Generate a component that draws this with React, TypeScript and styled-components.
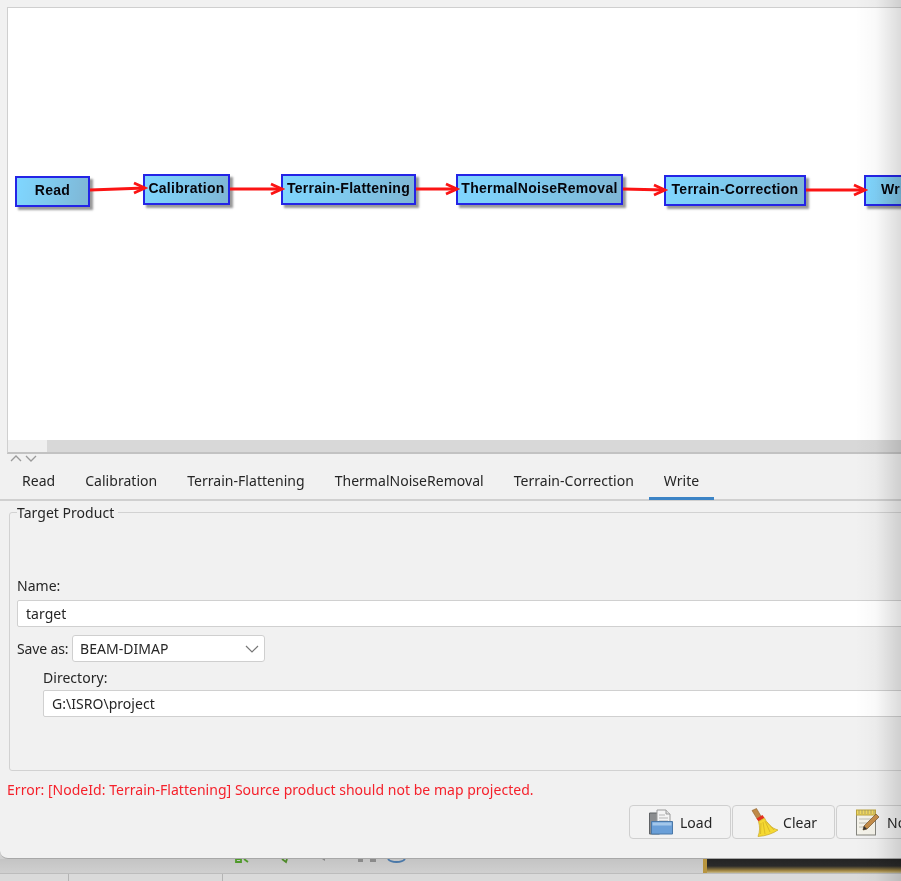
import React from "react";
import styled, { createGlobalStyle } from "styled-components";

const Global = createGlobalStyle`
  html, body { margin: 0; padding: 0; background: #d2d2d2; }
  * { box-sizing: border-box; }
`;

const Screen = styled.div`
  position: relative;
  width: 901px;
  height: 881px;
  overflow: hidden;
  font-family: "Noto Sans", "Open Sans", sans-serif;
  font-size: 14px;
  letter-spacing: 0.03px;
  color: #262626;
  background: #d0d0d0;
  filter: blur(0.35px);
`;

const Dialog = styled.div`
  position: relative;
  z-index: 1;
  width: 901px;
  height: 859px;
  padding-top: 7px;
  background: #f1f1f1;
  border-bottom: 1px solid #a8a8a8;
  border-bottom-left-radius: 8px;
  display: flex;
  flex-direction: column;
  overflow: hidden;
`;

const EdgeShade = styled.div`
  position: absolute;
  top: 0;
  right: 0;
  bottom: 0;
  width: 46px;
  background: linear-gradient(to right, rgba(0,0,0,0) 0%, rgba(0,0,0,0.025) 45%, rgba(0,0,0,0.14) 100%);
  pointer-events: none;
  z-index: 5;
`;

const CanvasFrame = styled.div`
  margin-left: 7px;
  width: 910px;
  height: 447px;
  flex: none;
  border: 1px solid #cfcfcf;
  border-bottom: 2px solid #c2c2c2;
  display: flex;
  flex-direction: column;
`;

const Canvas = styled.div`
  position: relative;
  height: 433px;
  background: #fff;
`;

const ScrollTrack = styled.div`
  height: 12px;
  background: #d8d8d8;
`;

const ScrollThumb = styled.div`
  width: 39px;
  height: 100%;
  background: #efefef;
`;

const Node = styled.div<{ $x: number; $y: number; $w: number; $up?: boolean }>`
  position: absolute;
  left: ${p => p.$x}px;
  top: ${p => p.$y}px;
  width: ${p => p.$w}px;
  height: 31px;
  border: 2px solid #2424e6;
  background: linear-gradient(100deg, #7fd6ff 0%, #7fc8ec 50%, #7fb6d4 100%);
  box-shadow: 3px 3px 2px rgba(70, 70, 70, 0.55);
  display: flex;
  align-items: center;
  justify-content: center;
  padding-bottom: 4px;
  font-family: "Liberation Sans", Arial, sans-serif;
  font-weight: 700;
  font-size: 14px;
  letter-spacing: 0.28px;
  color: #05050c;
  white-space: nowrap;
  overflow: hidden;
`;

const WriteLabel = styled.span`
  position: absolute;
  left: 15px;
  top: 4px;
`;

const Arrows = styled.svg`
  position: absolute;
  left: 0;
  top: 0;
  width: 900px;
  height: 433px;
  pointer-events: none;
`;

const Chevrons = styled.svg`
  display: block;
  margin: 0 0 0 10px;
  width: 28px;
  height: 10px;
  flex: none;
`;

const TabBar = styled.div`
  display: flex;
  height: 37px;
  padding-left: 7px;
  border-bottom: 2px solid #d0d0d0;
  flex: none;
`;

const Tab = styled.div<{ $active?: boolean }>`
  height: 36px;
  padding: 7px 15px 0;
  line-height: 20px;
  white-space: nowrap;
  border-bottom: 3px solid ${p => (p.$active ? "#3c84c6" : "transparent")};
`;

const Group = styled.fieldset`
  margin: 2px 0 0 9px;
  padding: 0 0 0 7px;
  width: 920px;
  height: 268px;
  flex: none;
  border: 1px solid #d2d2d2;
  border-radius: 3px;
  min-inline-size: 0;
  display: block;
`;

const Legend = styled.legend`
  padding: 0 4px 0 0;
  line-height: 19px;
  white-space: nowrap;
`;

const Label = styled.div<{ $top: number; $indent?: number }>`
  margin-top: ${p => p.$top}px;
  margin-left: ${p => p.$indent ?? 0}px;
  line-height: 18px;
  white-space: nowrap;
`;

const TextField = styled.div<{ $indent?: number; $top?: number }>`
  margin-left: ${p => p.$indent ?? 0}px;
  margin-top: ${p => p.$top ?? 0}px;
  height: 27px;
  padding: 0 8px;
  line-height: 26px;
  background: #fff;
  border: 1px solid #d0d0d0;
  border-radius: 2px;
`;

const SaveRow = styled.div`
  display: flex;
  align-items: center;
  gap: 3px;
  margin-top: 8px;
  height: 27px;
`;

const SaveLabel = styled.span`
  width: 52px;
  flex: none;
  letter-spacing: -0.15px;
  white-space: nowrap;
`;

const Select = styled.div`
  width: 193px;
  height: 27px;
  padding: 0 5px 0 7px;
  background: #fff;
  border: 1px solid #cfcfcf;
  border-radius: 3px;
  display: flex;
  align-items: center;
  justify-content: space-between;
  line-height: 26px;
`;

const ErrorText = styled.div`
  margin: 9px 0 0 7px;
  line-height: 20px;
  color: #f5212b;
  white-space: nowrap;
  flex: none;
`;

const Actions = styled.div`
  display: flex;
  gap: 1px;
  margin: 5px 0 0 629px;
  width: 400px;
  flex: none;
`;

const ActionButton = styled.div<{ $w: number; $gap?: number }>`
  width: ${p => p.$w}px;
  height: 34px;
  flex: none;
  display: flex;
  align-items: center;
  justify-content: flex-start;
  gap: ${p => p.$gap ?? 6}px;
  padding-left: 18px;
  background: #f2f2f2;
  border: 1px solid #cfcfcf;
  border-radius: 4px;
  white-space: nowrap;
`;

const BottomStrip = styled.div`
  height: 22px;
  position: relative;
  background: linear-gradient(to bottom, #c4c4c4, #d6d6d6);
`;

const StatusLine = styled.div`
  position: absolute;
  left: 0;
  right: 0;
  top: 14px;
  height: 8px;
  background: #dadada;
  border-top: 1px solid #bcbcbc;
  display: flex;
`;

const StatusCell = styled.div<{ $w: number }>`
  width: ${p => p.$w}px;
  border-right: 1px solid #b4b4b4;
  flex: none;
`;

const ToolRow = styled.svg`
  position: absolute;
  left: 230px;
  top: 0;
  width: 190px;
  height: 5px;
`;

const PhotoEdge = styled.div`
  position: absolute;
  z-index: 1;
  left: 703px;
  right: 0;
  top: 0;
  height: 14px;
  background: linear-gradient(to bottom, #242424 0%, #2a2a2a 50%, #a88c45 85%, #c4b98f 100%);
  border-left: 4px solid #b8953f;
`;

const nodes = [
  { label: "Read", x: 7, y: 168, w: 75 },
  { label: "Calibration", x: 135, y: 166, w: 87 },
  { label: "Terrain-Flattening", x: 273, y: 166, w: 135 },
  { label: "ThermalNoiseRemoval", x: 448, y: 166, w: 167 },
  { label: "Terrain-Correction", x: 656, y: 167, w: 142 },
];

const links = [
  [82, 182, 137, 180],
  [222, 181, 274, 181],
  [408, 181, 449, 181],
  [615, 181, 657, 182],
  [798, 182, 857, 182],
];

const FolderIcon = () => (
  <svg width="26" height="27" viewBox="0 0 26 27">
    <path d="M1.500 4h10v21h-10z" fill="#8b8d8f" stroke="#5f6265" />
    <path d="M9 1h9l4 4v12H9z" fill="#f4f4f4" stroke="#9a9a9a" />
    <path d="M18 1v4h4" fill="#ddd" stroke="#9a9a9a" />
    <path d="M11 6h6M11 9h9M11 12h9" stroke="#b5b5b5" />
    <path d="M3.500 12.500h21v12.500h-21z" fill="#6a9fd8" stroke="#4a78a8" />
    <path d="M4.500 13.500h19v3h-19z" fill="#a3c7ea" />
  </svg>
);

const BroomIcon = () => (
  <svg width="28" height="29" viewBox="0 0 28 29">
    <path d="M1 2.500l4.500-2 5 8.500-4 2.500z" fill="#c08a48" stroke="#8f6128" strokeWidth=".6" />
    <path d="M5.500 10.500l6-3.500 2 3-6 3.500z" fill="#e4301f" />
    <path d="M7.500 13.500l6-3.500c3 6 7 10 13.500 12-5 3.500-12 6-20 6.500 2-5 2-10 .5-15z" fill="#f5d932" stroke="#c8a828" strokeWidth=".7" />
    <path d="M10 15l-.5 11M12 14l2 12M14 13l5 11M16 14l7 8" stroke="#d4b324" strokeWidth=".8" fill="none" />
  </svg>
);

const NoteIcon = () => (
  <svg width="26" height="27" viewBox="0 0 26 27">
    <rect x="1.500" y="4" width="19" height="22" fill="#f5f3ea" stroke="#85857f" />
    <rect x="1.500" y="1" width="19" height="5" fill="#f1d85f" stroke="#b9a23d" />
    <path d="M4 1v4M7 1v4M10 1v4M13 1v4M16 1v4M19 1v4" stroke="#8f8f70" strokeWidth=".7" />
    <path d="M4 10h12M4 14h8M4 18h6" stroke="#bcbcb2" />
    <path d="M8 21l1-4L21 5l3 3L12 20z" fill="#c58d49" stroke="#73522a" strokeWidth=".7" />
    <path d="M8 21l1-4 3 3z" fill="#333" />
  </svg>
);

export default function App() {
  return (
    <Screen>
      <Global />
      <Dialog>
        <CanvasFrame>
          <Canvas>
            {nodes.map(n => (
              <Node key={n.label} $x={n.x} $y={n.y} $w={n.w}>{n.label}</Node>
            ))}
            <Node $x={856} $y={167} $w={60}><WriteLabel>Write</WriteLabel></Node>
            <Arrows viewBox="0 0 900 433">
              {links.map(([a, b, c, d]) => (
                <g key={a} fill="none" stroke="#fb1414" strokeWidth="2.800">
                  <path d={`M${a} ${b}L${c} ${d}`} />
                  <path d={`M${c - 11} ${d - 5}L${c} ${d}L${c - 11} ${d + 5}`} />
                </g>
              ))}
            </Arrows>
          </Canvas>
          <ScrollTrack><ScrollThumb /></ScrollTrack>
        </CanvasFrame>
        <Chevrons viewBox="0 0 28 10">
          <path d="M1 7l5-5 5 5M16 2l5 5 5-5" fill="none" stroke="#9a9a9a" strokeWidth="1.300" />
        </Chevrons>
        <TabBar>
          <Tab>Read</Tab>
          <Tab>Calibration</Tab>
          <Tab>Terrain-Flattening</Tab>
          <Tab>ThermalNoiseRemoval</Tab>
          <Tab>Terrain-Correction</Tab>
          <Tab $active>Write</Tab>
        </TabBar>
        <Group>
          <Legend>Target Product</Legend>
          <Label $top={55}>Name:</Label>
          <TextField $top={5}>target</TextField>
          <SaveRow>
            <SaveLabel>Save as:</SaveLabel>
            <Select>
              <span>BEAM-DIMAP</span>
              <svg width="14" height="8" viewBox="0 0 14 8">
                <path d="M1 1l6 6 6-6" fill="none" stroke="#777" strokeWidth="1.200" />
              </svg>
            </Select>
          </SaveRow>
          <Label $top={7} $indent={26}>Directory:</Label>
          <TextField $indent={26} $top={3}>G:\ISRO\project</TextField>
        </Group>
        <ErrorText>Error: [NodeId: Terrain-Flattening] Source product should not be map projected.</ErrorText>
        <Actions>
          <ActionButton $w={102}><FolderIcon />Load</ActionButton>
          <ActionButton $w={103} $gap={4}><BroomIcon />Clear</ActionButton>
          <ActionButton $w={103}><NoteIcon />Note</ActionButton>
        </Actions>
      </Dialog>
      <BottomStrip>
        <ToolRow viewBox="0 0 190 5">
          <path d="M6 0h5v3H6zM14 0l4 3" fill="none" stroke="#4f9a2a" strokeWidth="1.800" />
          <path d="M52 0l4 3 1-3" fill="none" stroke="#4f8a2a" strokeWidth="1.800" />
          <path d="M92 0h3v2z" fill="#888" />
          <path d="M128 0h5v3h-5zM140 0h6v3h-6z" fill="#8a8a8a" />
          <path d="M158 0c3 4 14 4 17 0" fill="none" stroke="#4a78a8" strokeWidth="1.800" />
        </ToolRow>
        <PhotoEdge />
        <StatusLine>
          <StatusCell $w={69} />
          <StatusCell $w={154} />
        </StatusLine>
      </BottomStrip>
      <EdgeShade />
    </Screen>
  );
}
